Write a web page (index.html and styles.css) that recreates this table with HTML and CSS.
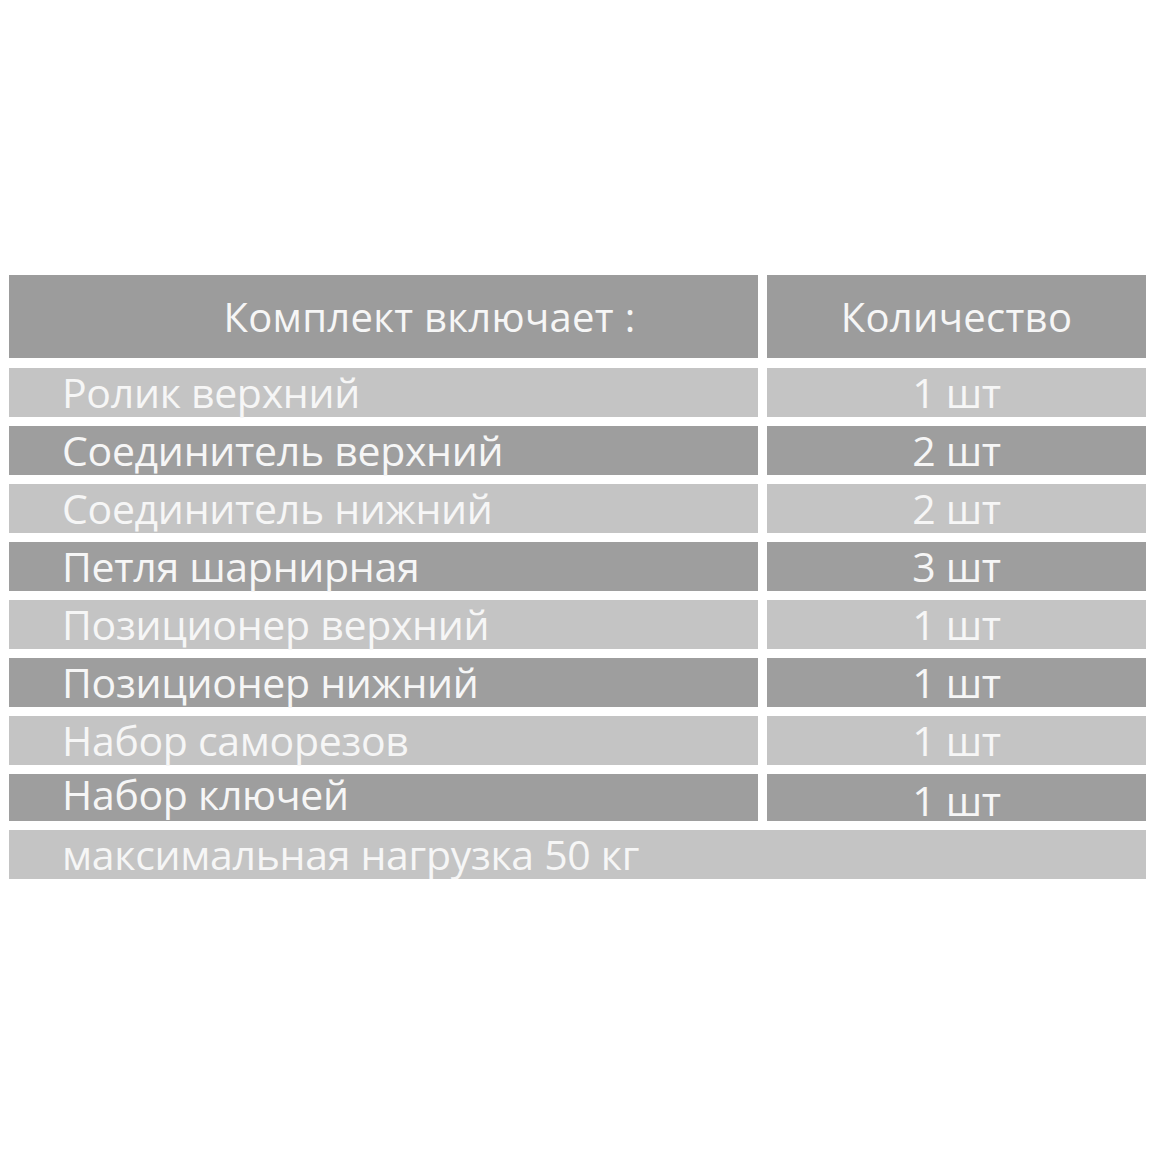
FILE: index.html
```html
<!DOCTYPE html>
<html lang="ru">
<head>
<meta charset="utf-8">
<title>Комплект</title>
<link rel="stylesheet" href="styles.css">
</head>
<body>
<div class="page">
  <div class="table">
    <div class="head head-name">Комплект включает :</div>
    <div class="head head-qty">Количество</div>

    <div class="cell name light">Ролик верхний</div>
    <div class="cell qty light">1 шт</div>

    <div class="cell name dark">Соединитель верхний</div>
    <div class="cell qty dark">2 шт</div>

    <div class="cell name light">Соединитель нижний</div>
    <div class="cell qty light">2 шт</div>

    <div class="cell name dark">Петля шарнирная</div>
    <div class="cell qty dark">3 шт</div>

    <div class="cell name light">Позиционер верхний</div>
    <div class="cell qty light">1 шт</div>

    <div class="cell name dark">Позиционер нижний</div>
    <div class="cell qty dark">1 шт</div>

    <div class="cell name light">Набор саморезов</div>
    <div class="cell qty light">1 шт</div>

    <div class="cell name dark short raised">Набор ключей</div>
    <div class="cell qty dark short lowered">1 шт</div>

    <div class="cell name light wide">максимальная нагрузка 50 кг</div>
  </div>
</div>
</body>
</html>
```
FILE: styles.css
```css
html, body {
  margin: 0;
  padding: 0;
  background: #ffffff;
}

.page {
  padding: 275px 10px 0 9px;
}

.table {
  display: grid;
  grid-template-columns: 749px 379px;
  column-gap: 9px;
  row-gap: 9px;
  font-family: "Open Sans", "Noto Sans", sans-serif;
  color: #f6f6f6;
}

.head {
  height: 83px;
  margin-bottom: 1px;
  background: #9c9c9c;
  font-size: 40px;
  line-height: 83px;
  text-align: center;
  letter-spacing: 0.3px;
  white-space: nowrap;
}

.head-name {
  padding-left: 92px;
}

.cell {
  height: 49px;
  font-size: 41px;
  line-height: 49px;
  letter-spacing: -0.3px;
  white-space: nowrap;
}

.cell.short {
  height: 47px;
  line-height: 47px;
}

.cell.raised {
  line-height: 41px;
}

.cell.lowered {
  line-height: 53px;
}

.light {
  background: #c4c4c4;
}

.dark {
  background: #9e9e9e;
}

.name {
  padding-left: 53px;
}

.qty {
  text-align: center;
}

.wide {
  grid-column: 1 / 3;
}
```
